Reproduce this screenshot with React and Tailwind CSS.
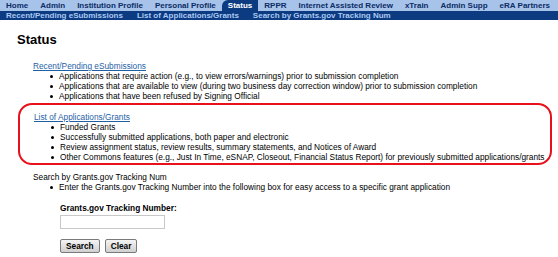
const topTabs = [
  'Home',
  'Admin',
  'Institution Profile',
  'Personal Profile',
  'Status',
  'RPPR',
  'Internet Assisted Review',
  'xTrain',
  'Admin Supp',
  'eRA Partners',
];

const subTabs = ['Recent/Pending eSubmissions', 'List of Applications/Grants', 'Search by Grants.gov Tracking Num'];

const Bullet = ({ children }) => (
  <div className="flex items-center h-[10px] whitespace-nowrap">
    <span className="w-[26px] flex justify-end pr-[6px]">
      <span className="block w-[3px] h-[3px] rounded-full bg-black" />
    </span>
    <span>{children}</span>
  </div>
);

const SectionLink = ({ children }) => (
  <div className="h-[10px] leading-[10px]">
    <a href="#" className="text-[#1f5fa6] underline">
      {children}
    </a>
  </div>
);

export default function App() {
  return (
    <div
      className="w-[558px] h-[257px] bg-white overflow-hidden text-black"
      style={{ fontFamily: '"Liberation Sans", Arial, sans-serif' }}
    >
      <nav className="text-[8px] font-bold leading-none">
        <div className="flex h-[11px] bg-[#a7c3ea] text-[#0b2c66]">
          {topTabs.map((t) =>
            t === 'Status' ? (
              <span key={t} className="px-[6px] flex items-center bg-[#0d3b82] text-white rounded-tl-[6px]">
                {t}
              </span>
            ) : (
              <span key={t} className="px-[6px] flex items-center">
                {t}
              </span>
            )
          )}
        </div>
        <div className="flex h-[9px] bg-[#0d3b82] text-[#a9c9f2] pl-[6px] gap-[14px]">
          {subTabs.map((t) => (
            <span key={t} className="flex items-center">
              {t}
            </span>
          ))}
        </div>
      </nav>

      <main className="pl-[17px] text-[8.3px] leading-[10px]">
        <h1 className="mt-[12px] text-[13px] font-bold leading-[16px]">Status</h1>

        <div className="mt-[13px] pl-[16px]">
          <SectionLink>Recent/Pending eSubmissions</SectionLink>
          <Bullet>Applications that require action (e.g., to view errors/warnings) prior to submission completion</Bullet>
          <Bullet>Applications that are available to view (during two business day correction window) prior to submission completion</Bullet>
          <Bullet>Applications that have been refused by Signing Official</Bullet>
        </div>

        <div className="mt-[2px] -ml-[-1px] w-[534px] h-[62px] border-2 border-[#e8101a] rounded-[14px] pt-[7px] pl-[14px]">
          <SectionLink>List of Applications/Grants</SectionLink>
          <Bullet>Funded Grants</Bullet>
          <Bullet>Successfully submitted applications, both paper and electronic</Bullet>
          <Bullet>Review assignment status, review results, summary statements, and Notices of Award</Bullet>
          <Bullet>
            Other Commons features (e.g., Just In Time, eSNAP, Closeout, Financial Status Report) for previously
            submitted applications/grants
          </Bullet>
        </div>

        <div className="mt-[7px] pl-[16px]">
          <div className="h-[10px]">Search by Grants.gov Tracking Num</div>
          <Bullet>Enter the Grants.gov Tracking Number into the following box for easy access to a specific grant application</Bullet>

          <div className="pl-[27px] mt-[11px]">
            <div className="font-bold h-[10px]">Grants.gov Tracking Number:</div>
            <input
              type="text"
              className="block mt-[2px] w-[105px] h-[14px] border border-[#c8c8c8] bg-white"
            />
            <div className="flex gap-[5px] mt-[10px]">
              <button className="h-[14px] px-[5px] border border-[#7a7a7a] rounded-[2px] bg-gradient-to-b from-[#f4f4f4] to-[#d0d0d0] font-bold text-[8.3px] leading-none">
                Search
              </button>
              <button className="h-[14px] px-[5px] border border-[#7a7a7a] rounded-[2px] bg-gradient-to-b from-[#f4f4f4] to-[#d0d0d0] font-bold text-[8.3px] leading-none">
                Clear
              </button>
            </div>
          </div>
        </div>
      </main>
    </div>
  );
}
